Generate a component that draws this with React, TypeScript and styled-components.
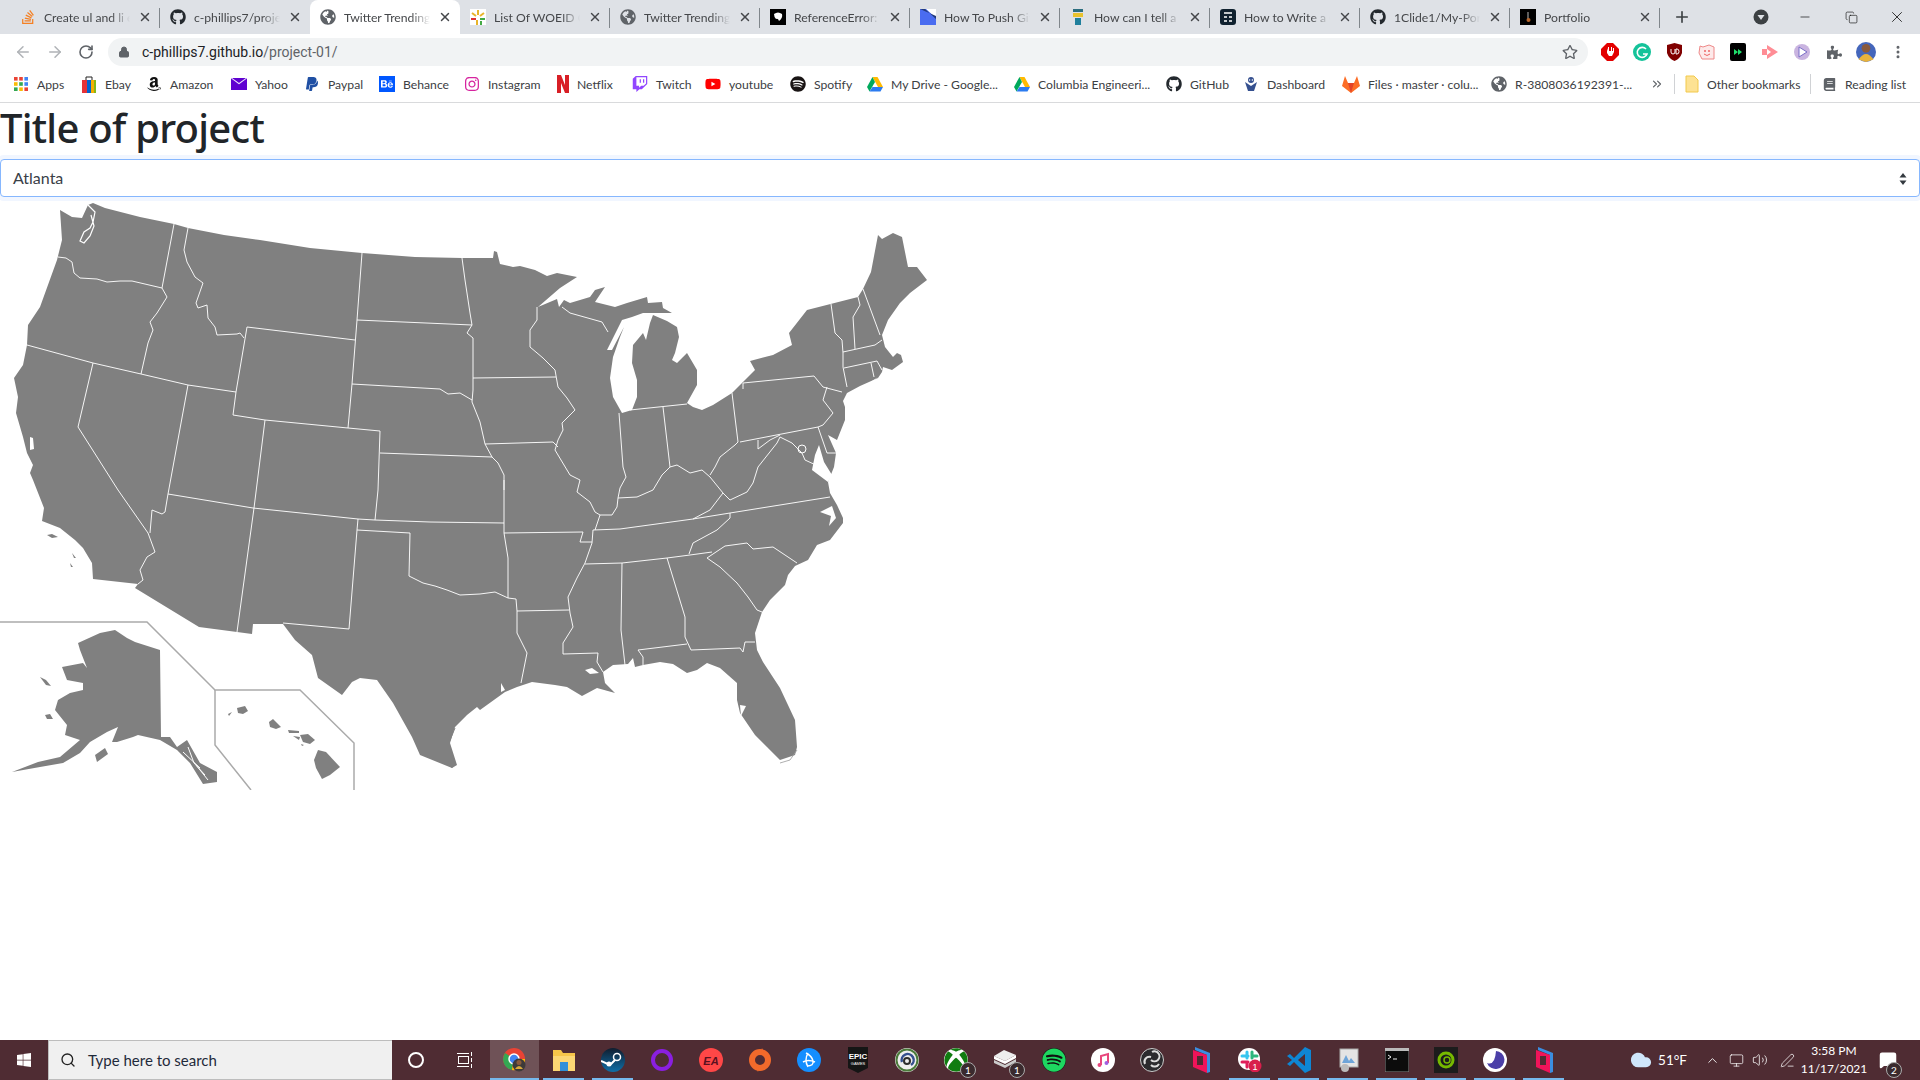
import React from "react";
import styled, { createGlobalStyle } from "styled-components";
import { FaStackOverflow, FaGithub, FaGlobeAmericas, FaAmazon, FaPaypal, FaBehance, FaInstagram, FaTwitch, FaYoutube, FaSpotify, FaXbox, FaWindows, FaPuzzlePiece, FaRegStar, FaBook } from "react-icons/fa";
import { ArrowLeft, ArrowRight, RotateCw, Lock, X, Plus, Minus, Search, EllipsisVertical, ChevronUp, Copy, ChevronsRight, Volume2, Cloud, Monitor, PenLine, MessageSquare } from "lucide-react";

const Global = createGlobalStyle`
  html, body { margin: 0; padding: 0; background: #fff; }
  body { width: 1920px; height: 1080px; overflow: hidden; font-family: "Noto Sans", sans-serif; }
`;
const Page = styled.div`display: flex; flex-direction: column; width: 1920px; height: 1080px;`;
const TabStrip = styled.div`display: flex; align-items: stretch; height: 34px; padding-left: 10px; background: #dee1e6;`;
const Tab = styled.div<{ $active?: boolean; $sep?: boolean }>`
  position: relative; display: flex; align-items: center; width: 150px; padding: 0 8px 0 10px; box-sizing: border-box; gap: 8px;
  background: ${p => (p.$active ? "#fff" : "transparent")}; border-radius: 8px 8px 0 0; color: #45474a;
  ${p => p.$sep && `&::after { content: ""; position: absolute; right: 0; top: 8px; height: 20px; width: 1px; background: #80868b; }`}
`;
const TabTitle = styled.span`
  flex: 1; overflow: hidden; white-space: nowrap; font: 12.2px Lato, sans-serif;
  -webkit-mask-image: linear-gradient(90deg, #000 78%, transparent 100%); mask-image: linear-gradient(90deg, #000 78%, transparent 100%);
`;
const Ico = styled.span<{ $c?: string; $s?: number; $bg?: string; $round?: boolean }>`
  display: inline-flex; align-items: center; justify-content: center; flex: none; width: ${p => p.$s ?? 16}px; height: ${p => p.$s ?? 16}px;
  color: ${p => p.$c ?? "#5f6368"}; font-size: ${p => p.$s ?? 16}px; background: ${p => p.$bg ?? "transparent"}; border-radius: ${p => (p.$round ? "50%" : "0")};
`;
const NewTab = styled.div`display: flex; align-items: center; margin-left: 13px; color: #3c4043;`;
const WindowZone = styled.div`display: flex; align-items: center; margin-left: auto; color: #111;`;
const WinBtn = styled.div`display: flex; align-items: center; justify-content: center; width: 46px; height: 30px;`;
const Profile = styled(WinBtn)`margin-right: -2px;`;
const Toolbar = styled.div`display: flex; align-items: center; height: 36px; background: #fff; padding-left: 14px;`;
const NavBtn = styled.div<{ $c: string }>`display: flex; width: 32px; color: ${p => p.$c};`;
const Omni = styled.div`
  display: flex; align-items: center; width: 1480px; height: 28px; margin-left: -2px; padding: 0 10px; box-sizing: border-box;
  border-radius: 14px; background: #f1f3f4; gap: 12px; color: #5f6368;
`;
const Url = styled.span`flex: 1; font: 14px Roboto, sans-serif; color: #5f6368; b { font-weight: 400; color: #202124; }`;
const Exts = styled.div`display: flex; align-items: center; margin-left: 6px;`;
const Ext = styled.div`display: flex; align-items: center; justify-content: center; width: 32px; color: #5f6368;`;
const BookBar = styled.div`display: flex; align-items: center; height: 33px; box-sizing: border-box; padding: 0 0 4px 13px; background: #fff; border-bottom: 1px solid #d9dadc;`;
const Bm = styled.div<{ $w: number }>`display: flex; align-items: center; width: ${p => p.$w}px; gap: 8px; flex: none; overflow: hidden;`;
const BmText = styled.span`font: 12.2px Lato, sans-serif; color: #3c4043; white-space: nowrap;`;
const BmSep = styled.div<{ $m: string }>`width: 1px; height: 20px; background: #d0d2d5; margin: ${p => p.$m};`;
const Main = styled.main`flex: 1; min-height: 0;`;
const Title = styled.h1`margin: 0 0 7px; padding-top: 1px; font: 500 40px/48px "Noto Sans", sans-serif; letter-spacing: -0.75px; color: #212529;`;
const SelectBox = styled.div`
  position: relative; display: flex; align-items: center; height: 38px; box-sizing: border-box; padding: 0 12px 2px; border: 1px solid #86b7fe; border-radius: 4px;
  box-shadow: 0 0 0 4px rgba(13,110,253,.06); font: 16px Lato, sans-serif; color: #3a4047; background: #fff;
`;
const Updown = styled.svg`position: absolute; right: 11px; top: 12px;`;
const MapSvg = styled.svg`display: block;`;
const Taskbar = styled.div`display: flex; align-items: stretch; height: 40px; background: #4f2c33; color: #fff;`;
const StartBtn = styled.div`display: flex; align-items: center; justify-content: center; width: 48px;`;
const SearchBox = styled.div`
  display: flex; align-items: center; width: 344px; box-sizing: border-box; background: #f0f0f0; border: 1px solid #bdbdbd; border-width: 1px 0 1px 1px; padding-left: 11px; gap: 12px;
  font: 15px Lato, sans-serif; color: #1f2a3a;
`;
const TaskSlot = styled.div<{ $w?: number; $on?: boolean; $hl?: boolean }>`
  position: relative; display: flex; align-items: center; justify-content: center; width: ${p => p.$w ?? 49}px; flex: none;
  background: ${p => (p.$hl ? "#6f5257" : "transparent")};
  ${p => p.$on && `&::after { content: ""; position: absolute; left: ${p.$hl ? 0 : 4}px; right: ${p.$hl ? 0 : 4}px; bottom: 0; height: 2px; background: #76b9ed; }`}
`;
const Badge = styled.span`
  position: absolute; right: 4px; bottom: 2px; width: 14px; height: 14px; border-radius: 50%; background: #3a2a2e; border: 1px solid #aaa;
  font: 10px/14px Lato, sans-serif; text-align: center; color: #fff; box-sizing: content-box;
`;
const NotifBadge = styled(Badge)`right: 3px; bottom: -9px;`;
const Tray = styled.div`display: flex; align-items: center; margin-left: auto; height: 100%; padding-right: 15px;`;
const Temp = styled.span`font: 13.5px Lato, sans-serif; margin: 0 13px 0 6px;`;
const TrayIcon = styled.div<{ $ml?: number }>`display: flex; justify-content: center; width: 24px; margin-left: ${p => p.$ml ?? 0}px;`;
const Clock = styled.div`display: flex; flex-direction: column; align-items: center; width: 74px; margin-left: -2px; font: 12px/18px Lato, sans-serif;`;
const Notif = styled.div`position: relative; display: flex; justify-content: center; width: 34px;`;

const Multi = ({ kind }: { kind: string }) => {
  switch (kind) {
    case "woeid": return <svg width="16" height="16" viewBox="0 0 16 16"><rect width="16" height="16" fill="#fff"/><path d="M8 1v5M2 4l4 3M14 4l-4 3" stroke="#e8b42a" strokeWidth="2"/><path d="M1 10h5" stroke="#d33" strokeWidth="2"/><path d="M10 10h5" stroke="#4a4" strokeWidth="2"/><rect x="6" y="11" width="2" height="5" fill="#e8b42a"/><rect x="10" y="12" width="2" height="4" fill="#4a4"/></svg>;
    case "ref": return <svg width="16" height="16" viewBox="0 0 16 16"><rect width="16" height="16" fill="#000"/><path d="M4 5q4-3 8 0 1 4-3 7-1-3-3-2-2-2-2-5z" fill="#fff"/></svg>;
    case "push": return <svg width="16" height="16" viewBox="0 0 16 16"><rect width="16" height="16" fill="#4a6cf0"/><path d="M0 0h6l10 9V0z" fill="#fff"/><path d="M0 0h5l11 10v-3z" fill="#233a7a"/></svg>;
    case "tell": return <svg width="16" height="16" viewBox="0 0 16 16"><rect x="3" y="0" width="10" height="3" fill="#2c6e7f"/><rect x="3" y="4" width="10" height="4" fill="#e8c22e"/><rect x="5" y="9" width="6" height="7" fill="#1f7f9c"/></svg>;
    case "write": return <svg width="16" height="16" viewBox="0 0 16 16"><rect width="16" height="16" rx="3" fill="#10212f"/><path d="M4 4h8M4 8h3M9 8h3M4 12h3M9 12h3" stroke="#fff" strokeWidth="1.6"/></svg>;
    case "port": return <svg width="16" height="16" viewBox="0 0 16 16"><rect width="16" height="16" fill="#000"/><path d="M8 3v9" stroke="#999" strokeWidth="1.2"/><circle cx="8.5" cy="11" r="2" fill="#b5642b"/></svg>;
    case "apps": return <svg width="16" height="16" viewBox="0 0 16 16">{[0,1,2].flatMap(r=>[0,1,2].map(c=><rect key={r+"-"+c} x={1+c*5.2} y={1+r*5.2} width="3.6" height="3.6" fill={[["#ea4335","#ea4335","#4285f4"],["#fbbc05","#34a853","#4285f4"],["#34a853","#fbbc05","#ea4335"]][r][c]}/>))}</svg>;
    case "ebay": return <svg width="16" height="18" viewBox="0 0 16 18"><path d="M5 5V2h6v3" fill="none" stroke="#222" strokeWidth="1"/><rect x="1" y="5" width="5" height="13" fill="#e53238"/><rect x="6" y="5" width="4" height="13" fill="#0064d2"/><rect x="10" y="5" width="5" height="13" fill="#f5af02"/><rect x="13" y="5" width="2" height="13" fill="#86b817"/></svg>;
    case "yahoo": return <svg width="16" height="14" viewBox="0 0 16 14"><rect y="1" width="16" height="12" fill="#5f01d1"/><path d="M0 1l8 6 8-6" fill="#fff" stroke="#fff" strokeWidth=".5"/><path d="M1 1l7 5 7-5z" fill="#5f01d1"/></svg>;
    case "netflix": return <svg width="12" height="18" viewBox="0 0 12 18"><path d="M0 0h4l4 10V0h4v18H8L4 8v10H0z" fill="#d81f26"/></svg>;
    case "drive": return <svg width="16" height="15" viewBox="0 0 16 15"><path d="M5.5 0h5L16 10h-5z" fill="#ffba00"/><path d="M5.5 0L0 10l2.5 4.5L8 5z" fill="#00a95c"/><path d="M2.5 14.5h11L16 10H5.5z" fill="#2b7bf0"/></svg>;
    case "dash": return <svg width="16" height="16" viewBox="0 0 16 16"><circle cx="8" cy="4" r="3" fill="#35508f"/><path d="M2 6l3 9h6l3-9-6 4z" fill="#35508f"/><circle cx="6.6" cy="4" r=".8" fill="#fff"/><circle cx="9.4" cy="4" r=".8" fill="#fff"/></svg>;
    case "gitlab": return <svg width="18" height="17" viewBox="0 0 18 17"><path d="M9 17L0 10 3 0l3 7h6l3-7 3 10z" fill="#fc6d26"/><path d="M9 17L6 7h6z" fill="#e24329"/></svg>;
    case "folder": return <svg width="14" height="18" viewBox="0 0 14 18"><path d="M1 1h8l4 4v12H1z" fill="#fde293" stroke="#f2c94c"/></svg>;
    case "mine": return <svg width="20" height="20" viewBox="0 0 16 16"><circle cx="8" cy="8" r="8" fill="#46b"/><circle cx="8" cy="5" r="3.5" fill="#8a5a3c"/><path d="M2 14q6-9 12 0l-6 2z" fill="#e8b33c"/></svg>;
    case "stop": return <svg width="18" height="18" viewBox="0 0 18 18"><path d="M6 0h6l6 6v6l-6 6H6l-6-6V6z" fill="#e30000" /><path d="M6 5v5l2 3h3l2-4V5h-1v3h-1V4h-1v4H8V4H7v4z" fill="#fff"/></svg>;
    case "gram": return <svg width="18" height="18" viewBox="0 0 18 18"><circle cx="9" cy="9" r="9" fill="#15c39a"/><path d="M13 6a5 5 0 1 0 1 5h-4" fill="none" stroke="#fff" strokeWidth="1.6"/></svg>;
    case "ublock": return <svg width="15" height="18" viewBox="0 0 15 18"><path d="M0 2l7.500-2L15 2v8q-2 6-7.500 8Q2 16 0 10z" fill="#800000"/><path d="M4 6v3q0 2 2 2t2-2V6M9 11V6h1q2 0 2 2.500T10 11z" fill="none" stroke="#fff"/></svg>;
    case "face": return <svg width="17" height="17" viewBox="0 0 17 17"><path d="M2 2l3 1 6-2 5 2v12H4L1 9z" fill="#fdeaea" stroke="#e88" /><circle cx="7" cy="7" r="1" fill="#e66"/><circle cx="11" cy="7" r="1" fill="#e66"/><path d="M6 10q3 3 6 0" stroke="#e66" fill="none"/></svg>;
    case "ff": return <svg width="16" height="18" viewBox="0 0 16 18"><rect width="16" height="18" rx="2" fill="#000"/><path d="M4 6l4 3-4 3zM8 6l4 3-4 3z" fill="#1fe06c"/></svg>;
    case "pink": return <svg width="16" height="14" viewBox="0 0 16 14"><path d="M0 4h5V0l11 7-11 7v-4H0z" fill="#ff8d95"/><path d="M5 4l4 3-4 3z" fill="#fff"/></svg>;
    case "play": return <svg width="16" height="16" viewBox="0 0 16 16"><circle cx="8" cy="8" r="8" fill="#c9b4e0"/><path d="M5 3l8 5-8 5z" fill="#fff" stroke="#7b6fc8"/></svg>;
    case "chrome": return <svg width="24" height="24" viewBox="0 0 24 24"><circle cx="11" cy="11" r="11" fill="#ea4335"/><path d="M11 11L2 5A11 11 0 0 0 9 22z" fill="#34a853"/><path d="M11 11h11a11 11 0 0 1-13 11z" fill="#fbbc05"/><circle cx="11" cy="11" r="5" fill="#4285f4" stroke="#fff" strokeWidth="1.500"/><circle cx="16" cy="17" r="6.500" fill="#3d3a3a"/><circle cx="16" cy="14.500" r="2.500" fill="#8a5a3c"/><path d="M12 21q4-6 8 0z" fill="#d8a83a"/></svg>;
    case "explorer": return <svg width="24" height="24" viewBox="0 0 24 24"><path d="M1 2h8l2 3h12v18H1z" fill="#f6c64a"/><rect x="1" y="8" width="22" height="15" fill="#fbd774"/><rect x="8" y="14" width="8" height="9" fill="#2f8fd8"/></svg>;
    case "steam": return <svg width="24" height="24" viewBox="0 0 24 24"><defs><linearGradient id="stg" x1="0" y1="0" x2="0" y2="1"><stop stopColor="#111d2e"/><stop offset="1" stopColor="#0f6fa8"/></linearGradient></defs><circle cx="12" cy="12" r="12" fill="url(#stg)"/><circle cx="16" cy="9" r="3.500" fill="none" stroke="#fff" strokeWidth="1.500"/><path d="M0 13l9 4 5-5" stroke="#fff" strokeWidth="2" fill="none"/><circle cx="8" cy="16" r="2.500" fill="#fff"/></svg>;
    case "ring": return <svg width="24" height="24" viewBox="0 0 24 24"><circle cx="12" cy="12" r="9" fill="none" stroke="#8a1fe0" strokeWidth="4"/></svg>;
    case "ea": return <svg width="24" height="24" viewBox="0 0 24 24"><circle cx="12" cy="12" r="12" fill="#ff4747"/><text x="12" y="16.500" textAnchor="middle" fontSize="11" fontWeight="700" fontStyle="italic" fontFamily="Liberation Sans" fill="#5a1020">EA</text></svg>;
    case "origin": return <svg width="24" height="24" viewBox="0 0 24 24"><circle cx="12" cy="12" r="8" fill="none" stroke="#f26a2b" strokeWidth="6"/><path d="M14 0l2 5-3-1zM10 24l-2-5 3 1z" fill="#f26a2b"/></svg>;
    case "bnet": return <svg width="24" height="24" viewBox="0 0 24 24"><circle cx="12" cy="12" r="12" fill="#148eff"/><path d="M9 5q6 3 7 8t-6 5M6 14q5-3 12 0M11 5q-4 7 0 14" fill="none" stroke="#fff" strokeWidth="1.500"/></svg>;
    case "epic": return <svg width="22" height="26" viewBox="0 0 22 26"><path d="M1 0h20v21l-10 5-10-5z" fill="#151515"/><text x="11" y="12" textAnchor="middle" fontSize="8" fontWeight="700" fontFamily="Liberation Sans" fill="#fff">EPIC</text><text x="11" y="18" textAnchor="middle" fontSize="4" fontFamily="Liberation Sans" fill="#fff">GAMES</text></svg>;
    case "ubi": return <svg width="24" height="24" viewBox="0 0 24 24"><circle cx="12" cy="12" r="12" fill="#eee"/><circle cx="12" cy="12" r="10.500" fill="none" stroke="#4a7a3a" strokeWidth="2"/><path d="M7 14a6 6 0 1 1 9 3" fill="none" stroke="#35508f" strokeWidth="2.500"/><circle cx="12" cy="13" r="3" fill="none" stroke="#2d2d2d" strokeWidth="2"/></svg>;
    case "itunes": return <svg width="24" height="24" viewBox="0 0 24 24"><circle cx="12" cy="12" r="12" fill="#fff"/><path d="M10 17V8l7-2v9" fill="none" stroke="#e8467c" strokeWidth="2"/><circle cx="8.500" cy="17" r="2" fill="#e8467c"/><circle cx="15.500" cy="15" r="2" fill="#a05fe0"/></svg>;
    case "obs": return <svg width="24" height="24" viewBox="0 0 24 24"><circle cx="12" cy="12" r="11.500" fill="#2b2b2e" stroke="#ccc"/><path d="M12 4a5 5 0 1 1-1 8M5 16a5 5 0 0 1 6-7M19 16a5 5 0 0 1-8 1" fill="none" stroke="#ddd" strokeWidth="2"/></svg>;
    case "pinkbook": return <svg width="22" height="26" viewBox="0 0 22 26"><path d="M5 0l15 6v19l-3 1V8L5 3z" fill="#3b8de0"/><path d="M3 3l14 5v18L3 20z" fill="#f0145a"/><rect x="7" y="9" width="6" height="9" fill="#4f2c33"/></svg>;
    case "slack": return <svg width="24" height="24" viewBox="0 0 24 24"><circle cx="11" cy="11" r="11" fill="#fff"/><path d="M9 4v6M4 8h6" stroke="#36c5f0" strokeWidth="3" strokeLinecap="round"/><path d="M14 4v6M14 8h5" stroke="#2eb67d" strokeWidth="3" strokeLinecap="round"/><path d="M4 14h6M9 14v5" stroke="#e01e5a" strokeWidth="3" strokeLinecap="round"/><circle cx="17" cy="18" r="6.500" fill="#d81f4c"/><text x="17" y="21.500" textAnchor="middle" fontSize="9" fontFamily="Liberation Sans" fill="#fff">1</text></svg>;
    case "vsc": return <svg width="24" height="26" viewBox="0 0 24 26"><path d="M18 0l6 3v20l-6 3L7 15l-4 4-3-2 5-4-5-4 3-2 4 4z" fill="#0e86d4"/><path d="M18 7v12l-7-6z" fill="#4f2c33"/></svg>;
    case "monitor": return <svg width="24" height="26" viewBox="0 0 24 26"><rect x="4" y="2" width="18" height="18" fill="#e4e4e4" stroke="#aaa"/><path d="M6 16l4-8 3 6 2-3 4 5z" fill="#6ea4d8"/><circle cx="9" cy="21" r="4" fill="#bbb"/></svg>;
    case "term": return <svg width="24" height="24" viewBox="0 0 24 24"><rect width="24" height="24" fill="#0c0c0c" stroke="#888"/><rect width="24" height="3" fill="#bbb"/><path d="M3 7l3 2-3 2M8 11h4" stroke="#eee" fill="none"/></svg>;
    case "nvidia": return <svg width="24" height="26" viewBox="0 0 24 26"><rect width="24" height="26" fill="#1c1c1c"/><circle cx="12" cy="13" r="7" fill="none" stroke="#76b900" strokeWidth="3"/><circle cx="13" cy="13" r="3" fill="none" stroke="#76b900" strokeWidth="1.500"/></svg>;
    case "moon": return <svg width="24" height="24" viewBox="0 0 24 24"><circle cx="12" cy="12" r="12" fill="#fff"/><path d="M13 3a9 9 0 1 1-9 12q8 3 9-12z" fill="#4b3fa8"/></svg>;
    case "stack": return <svg width="26" height="24" viewBox="0 0 26 24"><path d="M2 8l10-6 12 5-11 6z" fill="#eee"/><path d="M2 12l11 5 11-6v3l-11 6-11-5z" fill="#ccc"/><path d="M2 8v3l11 5 11-6V7l-11 6z" fill="#fff"/></svg>;
    default: return null;
  }
};

const F = (C: any, c: string, s = 16) => <Ico $c={c} $s={s}><C /></Ico>;
const tabs: [string, React.ReactNode][] = [
  ["Create ul and li e", F(FaStackOverflow, "#f48024")],
  ["c-phillips7/proje", F(FaGithub, "#24292e")],
  ["Twitter Trending", F(FaGlobeAmericas, "#5f6368")],
  ["List Of WOEID C", <Multi kind="woeid" />],
  ["Twitter Trending", F(FaGlobeAmericas, "#5f6368")],
  ["ReferenceError: c", <Multi kind="ref" />],
  ["How To Push Git", <Multi kind="push" />],
  ["How can I tell a", <Multi kind="tell" />],
  ["How to Write a C", <Multi kind="write" />],
  ["1Clide1/My-Port", F(FaGithub, "#24292e")],
  ["Portfolio", <Multi kind="port" />],
];
const books: [string, number, React.ReactNode][] = [
  ["Apps", 68, <Multi kind="apps" />], ["Ebay", 65, <Multi kind="ebay" />], ["Amazon", 85, F(FaAmazon, "#111")],
  ["Yahoo", 73, <Multi kind="yahoo" />], ["Paypal", 75, F(FaPaypal, "#1f4fa3")], ["Behance", 85, <Ico $c="#fff" $bg="#0057ff"><FaBehance size={12} /></Ico>],
  ["Instagram", 93, <Ico $c="#d6249f"><FaInstagram /></Ico>], ["Netflix", 75, <Multi kind="netflix" />], ["Twitch", 73, F(FaTwitch, "#9146ff")],
  ["youtube", 85, F(FaYoutube, "#f00")], ["Spotify", 77, F(FaSpotify, "#191414")], ["My Drive - Google...", 147, <Multi kind="drive" />],
  ["Columbia Engineeri...", 152, <Multi kind="drive" />], ["GitHub", 77, F(FaGithub, "#24292e")], ["Dashboard", 99, <Multi kind="dash" />],
  ["Files · master · colu...", 149, <Multi kind="gitlab" />], ["R-3808036192391-...", 159, F(FaGlobeAmericas, "#5f6368")],
];
const taskApps: [string, boolean, string?][] = [
  ["chrome", true], ["explorer", true], ["steam", true], ["ring", false], ["ea", false], ["origin", false], ["bnet", false], ["epic", false], ["ubi", false],
  ["xbox", false, "1"], ["stack", false, "1"], ["spotify", false], ["itunes", false], ["obs", false], ["pinkbook", false], ["slack", true], ["vsc", true], ["monitor", true], ["term", true], ["nvidia", true], ["moon", true], ["pinkbook", true],
];

const CONUS = `93,203 105,208 140,217 174,224 188,228 224,235 260,240 310,248 362,253 415,257 462,258 480,258 493,258 494,251 497,252 500,264 513,267 520,266 535,270 547,276 557,273 577,277 560,288 538,307 557,299 559,307 564,300 570,303 590,297 595,290 605,287 595,302 615,307 627,303 647,297 648,303 662,302 663,308 672,313 657,313 643,313 632,317 622,320 607,350 612,350 624,327 620,337 613,357 610,378 613,397 622,413 632,410 637,397 637,380 632,363 633,345 643,333 646,340 650,323 653,315 667,321 677,327 679,337 675,353 672,360 677,363 687,353 697,370 697,385 687,403 693,407 702,410 713,405 732,393 755,370 750,361 773,355 792,345 789,333 807,310 858,297 863,289 871,272 878,235 882,239 893,233 902,237 908,267 917,267 927,280 910,293 900,303 888,320 882,335 885,347 893,357 897,353 901,355 903,362 892,370 883,367 882,372 878,378 860,386 847,393 843,401 845,407 845,420 837,440 828,435 836,453 834,467 828,482 830,493 837,505 843,518 843,523 830,540 817,545 808,560 795,566 788,575 785,585 770,600 762,612 755,633 757,650 763,662 780,688 795,720 797,747 795,755 780,760 767,747 755,735 740,713 737,700 737,683 720,668 707,663 697,670 687,673 673,664 660,662 643,665 635,667 633,658 628,664 613,665 603,672 605,683 615,693 597,688 582,696 567,687 555,685 532,682 517,687 505,692 480,710 477,707 467,715 455,727 450,743 457,765 452,768 420,755 412,737 393,703 377,680 360,678 352,682 342,695 318,678 312,655 295,640 283,624 253,624 252,634 237,632 199,627 135,588 138,584 93,579 92,563 83,548 75,540 60,528 42,521 44,508 33,480 30,473 33,465 27,453 23,437 16,413 18,397 14,378 23,365 27,345 28,325 40,307 57,260 62,240 60,210 72,217 82,218 88,205`;
const BORDERS = [
  "58,257 66,258 72,262 74,273 80,278 97,279 107,282 120,281 132,281 162,288", "174,224 162,288 167,297 157,313 150,322 153,330 148,343 141,374",
  "27,345 93,363 141,374 188,385 236,392", "93,363 78,427 118,490 148,533 155,552 147,557 140,570 143,580 138,584", "188,385 168,494 165,512 162,514 152,510 150,533",
  "168,494 253,508 358,519 375,520 430,522 504,523", "254,508 237,632", "358,519 357,530 349,629 283,623", "357,530 410,533 409,576 423,583 435,586 447,590 460,595 480,594 495,592 508,598 516,599",
  "516,599 517,611 517,633 527,653 523,673 521,683", "504,480 504,533 508,558 508,598", "504,533 583,532 580,542 592,542", "517,611 569,610",
  "593,530 592,543 585,563 577,578 568,597 570,613 573,627 563,643 563,654 598,653 597,662 603,672", "585,564 622,563 667,558 690,555 712,552",
  "593,530 620,529 693,519 730,513 780,505 830,497", "622,563 621,630 625,665", "667,558 685,617 685,637 691,650", "687,644 638,650 643,657 643,665",
  "691,650 740,648 743,652 745,642 755,642", "707,558 720,567 737,583 748,597 757,610 762,612", "707,558 725,546 747,543 753,549 773,547 797,563",
  "730,513 730,518 717,530 693,543 689,554", "693,519 710,510 723,493 730,500 747,492 753,483 758,467 777,443 780,437 792,443 802,453 805,460 818,466",
  "723,493 710,477 702,470 690,473 677,465 670,467 662,475 653,490 637,497 618,498 617,507 612,515 600,515 595,530", "600,515 595,512 590,502 577,492 580,480 570,475 555,450 558,440 563,430 562,423 575,410 567,398 558,387 555,370 543,358 530,347 530,330 537,320 537,307",
  "619,413 623,467 626,477 620,488 618,498", "663,407 670,467", "630,410 687,404", "732,393 738,442 735,445 720,457 715,467 710,475", "740,442 818,427", "743,389 743,383 814,376 823,387 842,392",
  "827,387 823,400 833,413 823,425 818,427 827,453 836,453", "758,440 758,449 770,440 780,435", "831,304 835,333 842,340 843,353 843,367 847,387", "858,297 860,305 853,317 855,349", "863,289 880,335",
  "843,352 875,345 882,340", "844,368 877,361 882,370", "871,363 874,377", "562,307 570,313 602,322 608,332", "473,378 556,377", "485,444 553,442 558,447", "472,325 467,333 473,338 473,378 473,390 472,402 480,422 485,444 492,457 498,463 504,475 504,490",
  "462,258 465,280 470,313 472,325", "357,320 472,325", "362,253 357,320 352,384 348,428", "247,327 355,340", "247,327 236,392 233,415 265,420 348,428 380,431 378,490 375,520", "265,420 254,508",
  "352,384 440,389 448,394 460,393 472,400", "380,453 492,457", "188,228 184,250 187,262 195,277 203,283 196,303 198,308 207,305 208,318 215,327 217,335 237,334 240,333 244,338",
];
const WHITE = [
  "30,437 33,438 34,449 30,450", "819,445 824,462 832,475 828,482 812,470 815,455",
  "843,401 878,377 860,392", "820,512 832,506 836,518 829,526 831,516", "585,670 592,668 599,673 590,674", "501,683 505,690 501,692", "740,705 746,706 741,716",
];
const ISLES = ["47,535 52,534 58,537 52,538", "72,553 76,558 74,558", "70,563 73,567 71,567"];
const AK = "115,630 127,638 135,642 160,650 161,737 170,737 177,747 187,740 200,763 217,772 217,782 203,784 190,763 177,750 160,740 138,735 133,737 117,742 112,742 118,727 107,732 90,742 80,753 63,763 40,767 12,772 38,762 60,757 80,740 65,735 67,725 55,710 58,700 70,693 83,690 83,683 67,680 62,667 83,663 87,668 80,650 78,643 100,633";
const AK2 = ["40,677 46,680 51,686 46,685", "45,715 50,714 53,719 47,719", "95,755 105,748 108,754 97,762"];
const HI = ["237,708 245,706 248,711 243,714 238,713", "228,714 232,712 229,716", "269,722 273,719 281,727 276,729 270,727", "288,730 299,731 299,733 289,733", "293,736 300,737 299,740", "300,735 308,734 315,740 310,744 303,742", "301,744 304,745 302,746", "318,750 326,752 340,767 330,775 322,779 316,768 314,760"];
const AKW = ["188,747 194,763 205,775", "183,752 200,768", "196,765 208,780"];

const UsaMap = () => (
  <MapSvg width="960" height="593" viewBox="0 197 960 593">
    <polygon points={CONUS} fill="#808080" />
    {WHITE.map((p, i) => <polygon key={i} points={p} fill="#fff" />)}
    <polyline points="88,205 95,212 93,222 90,228 84,232 80,241 84,243 90,236 94,226 91,215" fill="none" stroke="#fff" strokeWidth="1.2" />
    {BORDERS.map((p, i) => <polyline key={i} points={p} fill="none" stroke="#fff" strokeWidth="1" opacity=".92" strokeLinejoin="round" />)}
    <circle cx="802" cy="449" r="4" fill="none" stroke="#fff" strokeWidth="1" />
    {ISLES.map((p, i) => <polygon key={i} points={p} fill="#808080" />)}
    <polyline points="452,768 448,745 455,728" fill="none" stroke="#808080" strokeWidth="1" />
    <polyline points="780,763 790,760 797,750" fill="none" stroke="#9a9a9a" strokeWidth=".8" />
    <polygon points={AK} fill="#808080" />
    {AK2.map((p, i) => <polygon key={i} points={p} fill="#808080" />)}
    {AKW.map((p, i) => <polyline key={i} points={p} fill="none" stroke="#fff" strokeWidth="1" />)}
    {HI.map((p, i) => <polygon key={i} points={p} fill="#808080" />)}
    <polyline points="0,622 147,622 215,690 300,690 354,743 354,790" fill="none" stroke="#aaa" strokeWidth="1.500" />
    <polyline points="215,690 215,745 251,790" fill="none" stroke="#aaa" strokeWidth="1.500" />
  </MapSvg>
);

const TaskIcon = ({ k }: { k: string }) => {
  if (k === "xbox") return <Ico $c="#107c10" $s={24} $bg="#fff" $round><FaXbox /></Ico>;
  if (k === "spotify") return <Ico $c="#1ed760" $s={24} $bg="#111" $round><FaSpotify /></Ico>;
  return <Multi kind={k} />;
};

export default function App() {
  return (
    <Page>
      <Global />
      <TabStrip>
        {tabs.map(([t, ic], i) => (
          <Tab key={i} $active={i === 2} $sep={i !== 1 && i !== 2}>
            {ic}
            <TabTitle>{t}</TabTitle>
            <X size={14} color="#45474a" strokeWidth={2.5} />
          </Tab>
        ))}
        <NewTab><Plus size={18} strokeWidth={2.2} /></NewTab>
        <WindowZone>
          <Profile><svg width="16" height="16" viewBox="0 0 16 16"><circle cx="8" cy="8" r="7.500" fill="#3c4043"/><path d="M4.500 6h7L8 11z" fill="#dee1e6"/></svg></Profile>
          <WinBtn><Minus size={14} strokeWidth={1.2} /></WinBtn>
          <WinBtn><Copy size={13} strokeWidth={1.2} /></WinBtn>
          <WinBtn><X size={18} strokeWidth={1.1} /></WinBtn>
        </WindowZone>
      </TabStrip>
      <Toolbar>
        <NavBtn $c="#b0b3b7"><ArrowLeft size={18} /></NavBtn>
        <NavBtn $c="#b0b3b7"><ArrowRight size={18} /></NavBtn>
        <NavBtn $c="#5f6368"><RotateCw size={16} strokeWidth={2.4} /></NavBtn>
        <Omni>
          <Lock size={12} fill="#5f6368" strokeWidth={2} />
          <Url><b>c-phillips7.github.io</b>/project-01/</Url>
          <Ico $c="#5f6368"><FaRegStar /></Ico>
        </Omni>
        <Exts>
          <Ext><Multi kind="stop" /></Ext><Ext><Multi kind="gram" /></Ext><Ext><Multi kind="ublock" /></Ext><Ext><Multi kind="face" /></Ext>
          <Ext><Multi kind="ff" /></Ext><Ext><Multi kind="pink" /></Ext><Ext><Multi kind="play" /></Ext><Ext><FaPuzzlePiece size={15} /></Ext>
          <Ext><Multi kind="mine" /></Ext><Ext><EllipsisVertical size={16} strokeWidth={2.5} /></Ext>
        </Exts>
      </Toolbar>
      <BookBar>
        {books.map(([t, w, ic], i) => <Bm key={i} $w={w}>{ic}<BmText>{t}</BmText></Bm>)}
        <ChevronsRight size={14} color="#5f6368" />
        <BmSep $m="0 10px" />
        <Bm $w={125}><Multi kind="folder" /><BmText>Other bookmarks</BmText></Bm>
        <BmSep $m="0 10px 0 0" />
        <Bm $w={90}><Ico $c="#5f6368"><FaBook size={13} /></Ico><BmText>Reading list</BmText></Bm>
      </BookBar>
      <Main>
        <Title>Title of project</Title>
        <SelectBox>
          Atlanta
          <Updown width="10" height="14" viewBox="0 0 10 14"><path d="M5 1l3.500 4.500h-7zM5 13L1.500 8.500h7z" fill="#343a40" /></Updown>
        </SelectBox>
        <UsaMap />
      </Main>
      <Taskbar>
        <StartBtn><FaWindows size={16} /></StartBtn>
        <SearchBox><Search size={16} color="#222" />Type here to search</SearchBox>
        <TaskSlot $w={48}><svg width="18" height="18" viewBox="0 0 18 18"><circle cx="9" cy="9" r="7" fill="none" stroke="#fff" strokeWidth="2"/></svg></TaskSlot>
        <TaskSlot $w={50}><svg width="18" height="18" viewBox="0 0 18 18" fill="none" stroke="#fff"><rect x="2.500" y="5.500" width="10" height="7"/><path d="M1 2.500h12M1 15.500h12M15.500 1v4M15.500 7v4M15.500 13v4"/></svg></TaskSlot>
        {taskApps.map(([k, on, b], i) => (
          <TaskSlot key={i} $on={on} $hl={i === 0}>
            <TaskIcon k={k} />
            {b && <Badge>{b}</Badge>}
          </TaskSlot>
        ))}
        <Tray>
          <Cloud size={22} fill="#cfe6fb" color="#cfe6fb" />
          <Temp>51°F</Temp>
          <TrayIcon><ChevronUp size={15} strokeWidth={1.4} /></TrayIcon>
          <TrayIcon><Monitor size={15} strokeWidth={1.2} /></TrayIcon>
          <TrayIcon><Volume2 size={16} strokeWidth={1.2} /></TrayIcon>
          <TrayIcon $ml={3}><PenLine size={15} strokeWidth={1.2} /></TrayIcon>
          <Clock><span>3:58 PM</span><span>11/17/2021</span></Clock>
          <Notif><MessageSquare size={18} fill="#fff" /><NotifBadge>2</NotifBadge></Notif>
        </Tray>
      </Taskbar>
    </Page>
  );
}
